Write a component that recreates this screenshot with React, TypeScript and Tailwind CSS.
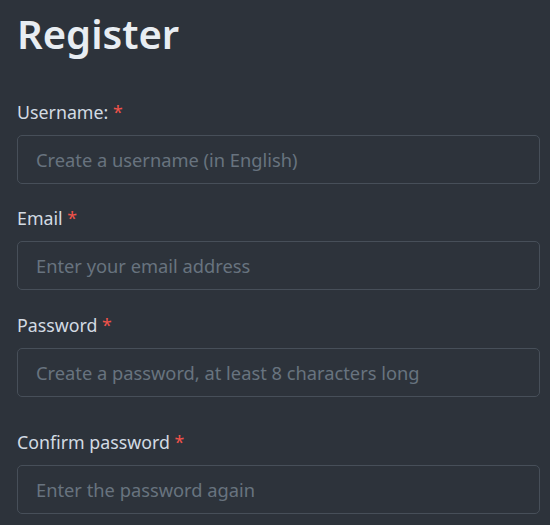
import type { ReactNode } from "react";

function Field({
  label,
  placeholder,
  type = "text",
  className = "",
}: {
  label: ReactNode;
  placeholder: string;
  type?: string;
  className?: string;
}) {
  return (
    <div className={className}>
      <label className="block text-[17.8px] leading-[24px] text-[#d3dbe3]">
        {label} <span className="text-[#f0524a]">*</span>
      </label>
      <input
        type={type}
        placeholder={placeholder}
        className="mt-[11px] block h-[49px] w-full rounded-[5px] border border-[#474f59] bg-transparent px-[18px] text-[18.3px] text-[#d3dbe3] outline-none placeholder:text-[#68737f]"
      />
    </div>
  );
}

export default function App() {
  return (
    <div
      className="min-h-[525px] bg-[#2d333b] pl-[17px] pr-[10px] pt-[5px]"
      style={{ fontFamily: '"Noto Sans", "Open Sans", sans-serif' }}
    >
      <h1 className="text-[40px] font-semibold leading-[58px] text-[#e8edf2]">Register</h1>
      <Field className="mt-[37px]" label="Username:" placeholder="Create a username (in English)" />
      <Field className="mt-[22px]" label="Email" placeholder="Enter your email address" type="email" />
      <Field className="mt-[23px]" label="Password" placeholder="Create a password, at least 8 characters long" type="password" />
      <Field className="mt-[33px]" label="Confirm password" placeholder="Enter the password again" type="password" />
    </div>
  );
}
